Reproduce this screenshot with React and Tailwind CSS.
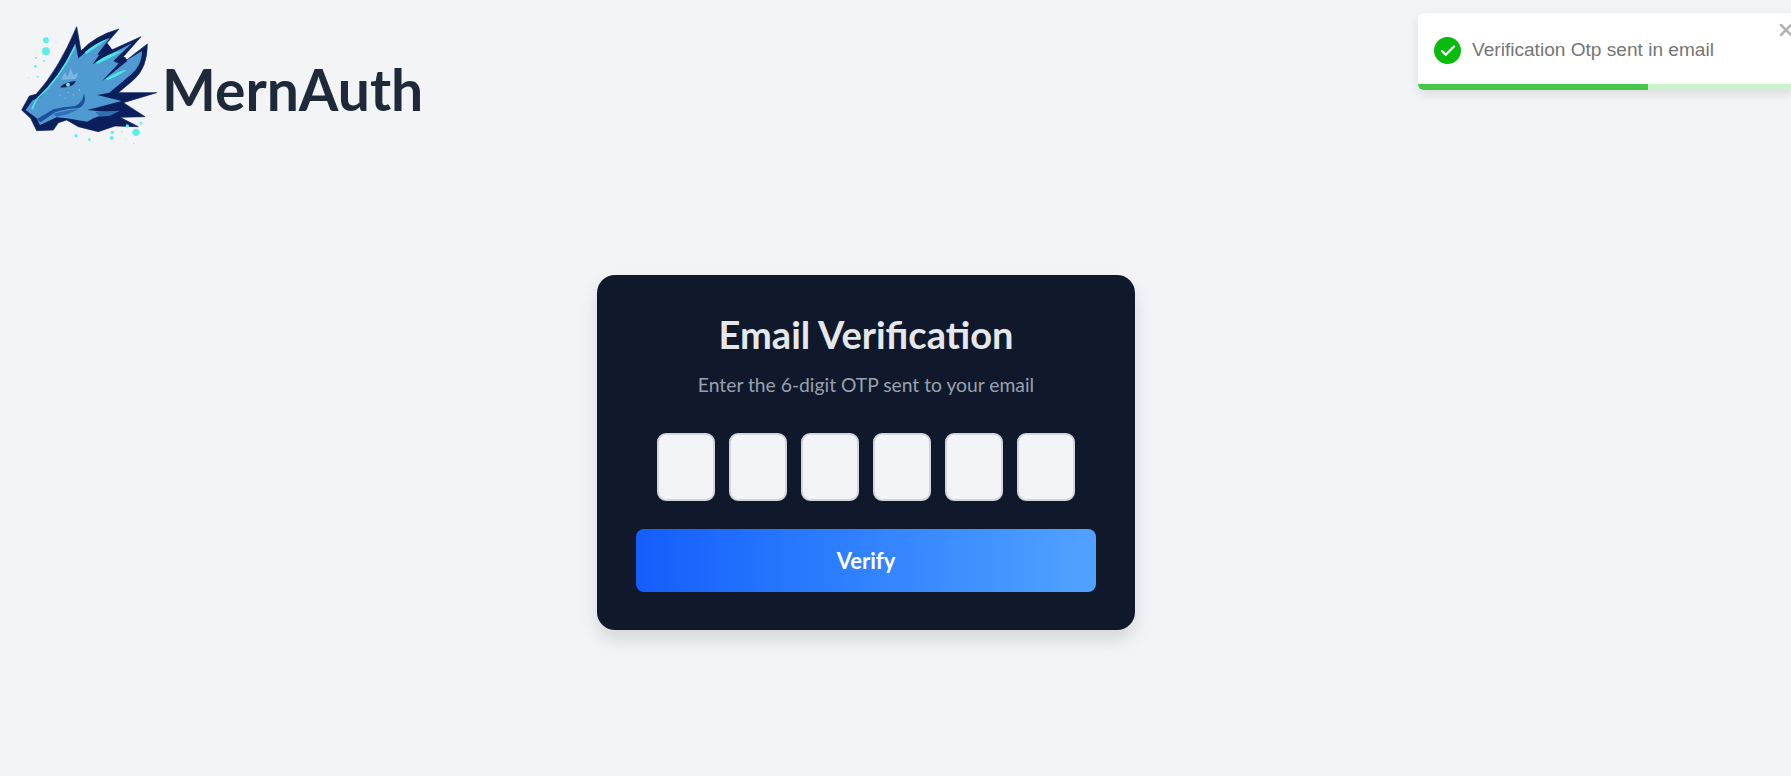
import { Check, X } from 'lucide-react';

const otpSlots = [0, 1, 2, 3, 4, 5];

// drawn in zoomed reference space: 1 unit = 1/3 px
function DragonLogo() {
  return (
    <svg viewBox="0 0 480 420" className="w-[160px] h-[140px] shrink-0">
      {/* dark silhouette */}
      <path
        d="M35 285 L58 243 L78 238 Q145 165 200 35 L213 108 Q255 62 327 42 L290 85 L305 105 L393 65 L340 125 L350 135 L412 87 Q412 160 370 195 L325 233 L440 233 L340 263 L405 305 L330 307 L385 335 L315 333 L265 350 L205 335 L170 315 L145 323 L130 345 L80 347 L62 310 Z"
        fill="#0b1f5c"
        stroke="#0b1f5c"
        strokeLinejoin="round"
        strokeWidth="2"
      />
      {/* head and spikes */}
      <path
        d="M47 285 L68 256 L88 250 Q150 185 196 85 L205 130 Q255 85 300 68 L262 118 L285 125 L366 85 L310 138 L330 148 L396 108 Q396 155 355 185 L298 233 L262 240 L335 258 L232 285 L300 292 L250 310 L232 320 L170 310 L140 307 L90 330 L80 310 Z"
        fill="#4f9ad0"
      />
      {/* notches between the spikes */}
      <path d="M292 84 L310 108 L248 148 Z" fill="#0b1f5c" />
      <path d="M345 125 L352 138 L274 200 Z" fill="#0b1f5c" />
      {/* cyan highlights */}
      <path d="M66 283 L78 255 Q150 190 195 95" fill="none" stroke="#4ee6e0" strokeWidth="5" />
      <path d="M224 112 Q255 85 296 70 Q265 93 228 118 Z" fill="#4ee6e0" />
      <path d="M258 142 Q295 115 342 106 Q305 128 262 147 Z" fill="#4ee6e0" />
      <path d="M288 192 Q320 168 352 164 Q325 183 292 196 Z" fill="#4ee6e0" />
      {/* mouth */}
      <path d="M92 322 L135 292 Q170 280 205 280 Q232 270 222 235 Q218 265 195 273 Q160 275 130 283 L80 313 Z" fill="#1d4f9c" />
      <path d="M130 296 Q165 285 205 282 Q180 298 140 305 Z" fill="#2f6fb8" />
      <path d="M255 290 L330 287 L300 302 L270 305 Z" fill="#2f6fb8" />
      {/* eye */}
      <path d="M150 217 Q165 200 198 198 Q188 220 150 217 Z" fill="#0b1f5c" />
      <circle cx="174" cy="209" r="6" fill="#6fe3e0" />
      <path d="M152 194 L165 172 L172 186 L182 160 L190 180 L205 172 L198 192 Z" fill="#79b6e2" />
      <g fill="#8cc9ee">
        <circle cx="150" cy="240" r="2" />
        <circle cx="175" cy="232" r="2" />
        <circle cx="190" cy="240" r="2" />
        <circle cx="208" cy="225" r="2.5" />
        <circle cx="165" cy="250" r="1.5" />
      </g>
      {/* sparks */}
      <g fill="#5ef0e6">
        <circle cx="108" cy="76" r="9" />
        <circle cx="108" cy="109" r="12" />
        <circle cx="78" cy="128" r="3" />
        <circle cx="102" cy="138" r="3" />
        <circle cx="76" cy="154" r="4" />
        <circle cx="83" cy="185" r="3" />
        <circle cx="56" cy="188" r="1.5" />
        <circle cx="138" cy="82" r="1.5" />
        <circle cx="378" cy="352" r="11" />
        <circle cx="352" cy="333" r="5" />
        <circle cx="393" cy="325" r="4" />
        <circle cx="307" cy="352" r="5" />
        <circle cx="305" cy="369" r="6" />
        <circle cx="198" cy="362" r="5" />
        <circle cx="238" cy="374" r="4" />
        <circle cx="335" cy="350" r="2" />
        <circle cx="348" cy="372" r="1.5" />
        <circle cx="372" cy="385" r="2" />
      </g>
    </svg>
  );
}

function Toast() {
  return (
    <div className="absolute top-[13px] left-[1418px] w-[378px] h-[77px] bg-white rounded-md shadow-[0_4px_12px_rgba(0,0,0,0.1)] overflow-hidden font-['Liberation_Sans',sans-serif]">
      <div className="flex items-center h-[75px] pl-4 gap-[11px]">
        <span className="flex items-center justify-center w-[27px] h-[27px] rounded-full bg-[#07bc0c]">
          <Check size={18} strokeWidth={3} className="text-white" />
        </span>
        <span className="text-[19.1px] text-[#757575]">Verification Otp sent in email</span>
      </div>
      <X size={20} strokeWidth={3} className="absolute top-[7px] right-0 text-[#b3b3b3]" />
      <div className="absolute bottom-0 left-0 w-full h-[6px] bg-[#cdf2ce]">
        <div className="h-full w-[230px] bg-[#45c84a]" />
      </div>
    </div>
  );
}

export default function App() {
  return (
    <div className="relative w-full h-[776px] overflow-hidden bg-[#f3f4f6] font-['Lato',sans-serif]">
      <header className="flex items-center pl-[10px] pt-[15px]">
        <DragonLogo />
        <span className="text-[57px] leading-none font-bold text-[#1e2939] -ml-[8px] mt-[8px]">MernAuth</span>
      </header>
      <Toast />
      <div className="ml-[597px] mt-[120px] w-[538px] h-[355px] bg-[#0f192b] rounded-[18px] px-[39px] pt-[34px] shadow-[0_10px_18px_rgba(0,0,0,0.12)]">
        <h1 className="text-[38px] leading-[50px] font-bold text-[#e5e7eb] text-center">Email Verification</h1>
        <p className="mt-[12px] text-[19.3px] leading-[28px] text-[#99a1af] text-center">Enter the 6-digit OTP sent to your email</p>
        <div className="flex justify-center gap-[14px] mt-[34px]">
          {otpSlots.map(i => (
            <input
              key={i}
              maxLength={1}
              className="w-[58px] h-[68px] rounded-[9px] bg-[#f3f4f6] border-2 border-[#d1d5dc] text-center"
            />
          ))}
        </div>
        <button className="block w-full h-[63px] mt-[28px] rounded-[8px] bg-gradient-to-r from-[#155dfc] to-[#51a2ff] text-white text-[22px] font-bold">
          Verify
        </button>
      </div>
    </div>
  );
}
